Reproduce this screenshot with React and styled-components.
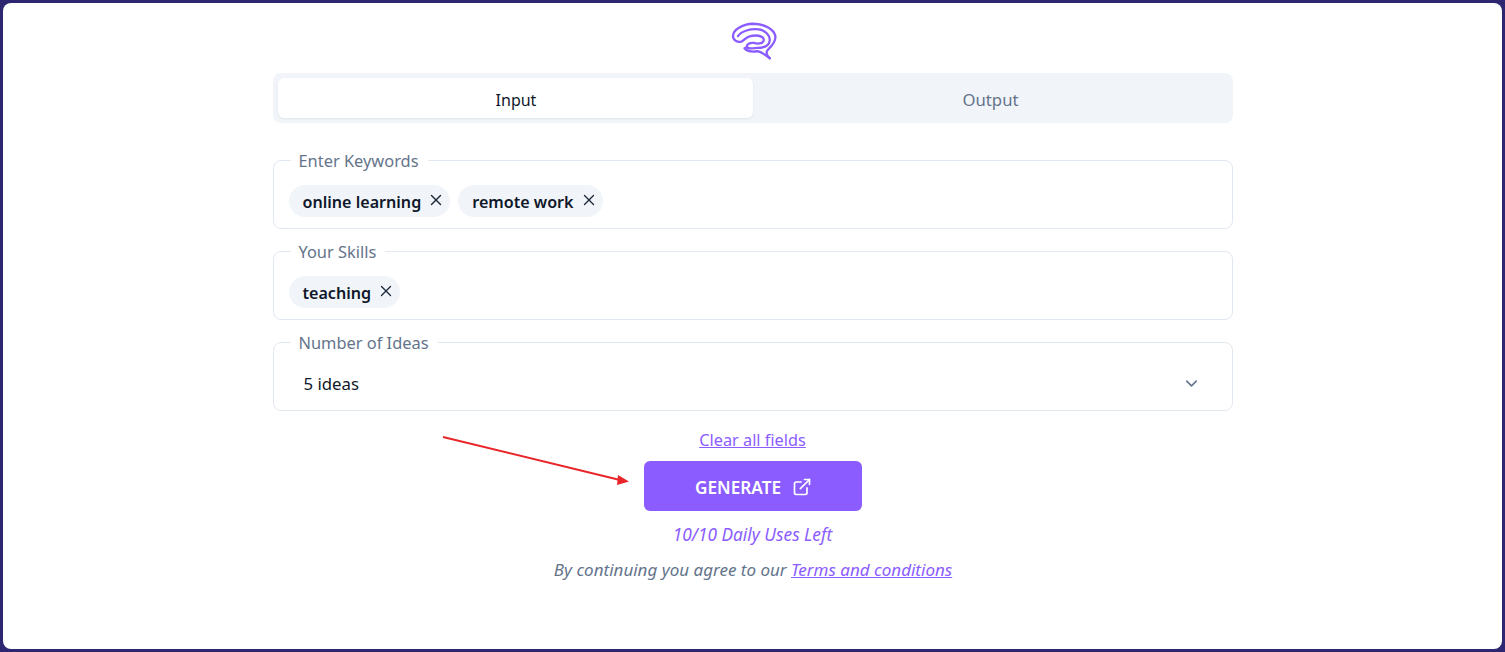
import React from 'react'
import styled, { createGlobalStyle } from 'styled-components'
import { ChevronDown, ExternalLink, X } from 'lucide-react'

const GlobalStyle = createGlobalStyle`
  html, body {
    margin: 0;
    padding: 0;
    height: 100%;
    background: #2e2670;
  }
  body {
    font-family: "Noto Sans", "Open Sans", "Liberation Sans", sans-serif;
    overflow: hidden;
  }
`

const Panel = styled.main`
  position: relative;
  box-sizing: border-box;
  width: 1499px;
  height: 646px;
  margin: 3px;
  padding-top: 17px;
  background: #fff;
  border-radius: 8px;
  display: flex;
  flex-direction: column;
  align-items: center;
`

const Logo = styled.svg`
  display: block;
  width: 48px;
  height: 40px;
  margin-bottom: 13px;
`

const Column = styled.div`
  width: 960px;
  display: flex;
  flex-direction: column;
`

const Tabs = styled.div`
  display: grid;
  grid-template-columns: 1fr 1fr;
  box-sizing: border-box;
  height: 50px;
  padding: 5px;
  margin-bottom: 26px;
  background: #f1f5f9;
  border-radius: 8px;
`

const Tab = styled.div`
  display: flex;
  align-items: center;
  justify-content: center;
  padding: ${p => (p.$active ? '3px 0 0 2px' : '2px 0 0 1px')};
  font-size: ${p => (p.$active ? '16px' : '16.7px')};
  color: ${p => (p.$active ? '#0f172a' : '#64748b')};
  background: ${p => (p.$active ? '#fff' : 'transparent')};
  border-radius: 6px;
  box-shadow: ${p => (p.$active ? '0 1px 2px rgba(15, 23, 42, 0.08)' : 'none')};
`

const Field = styled.fieldset`
  box-sizing: border-box;
  min-width: 0;
  margin: 0 0 11px;
  padding: 0 15px;
  border: 1px solid #e2e8f0;
  border-radius: 8px;
`

const Legend = styled.legend`
  margin-left: 2px;
  padding: 2px 9px 0 8px;
  font-size: 16.4px;
  line-height: 20px;
  color: #64748b;
`

const FieldBody = styled.div`
  display: flex;
  align-items: center;
  gap: 8px;
  height: 32px;
  padding: 14px 0 11px;
`

const Chip = styled.span`
  display: inline-flex;
  align-items: center;
  gap: 6px;
  box-sizing: border-box;
  height: 32px;
  padding: 1px 5px 0 14px;
  border-radius: 16px;
  background: #f1f5f9;
  color: #0f172a;
  font-size: 16.1px;
  font-weight: 600;
`

const ChipClose = styled(X)`
  width: 18px;
  height: 18px;
  margin-bottom: 3px;
  color: #1e293b;
`

const SelectValue = styled.div`
  flex: 1;
  padding-left: 15px;
  font-size: 16.8px;
  color: #0f172a;
`

const Chevron = styled(ChevronDown)`
  width: 19px;
  height: 19px;
  margin-right: 16px;
  color: #64748b;
`

const Actions = styled.div`
  display: flex;
  flex-direction: column;
  align-items: center;
  margin-top: 6px;
`

const TextLink = styled.a`
  color: #8b5cff;
  text-decoration: underline;
  font-size: 17px;
`

const ClearLink = styled(TextLink)`
  font-size: 16.3px;
  line-height: 24px;
  margin-bottom: 9px;
`

const GenerateButton = styled.button`
  display: flex;
  align-items: center;
  justify-content: center;
  gap: 11px;
  box-sizing: border-box;
  width: 218px;
  height: 50px;
  padding: 2px 0 0 2px;
  border: 0;
  border-radius: 6px;
  background: #8b5cff;
  color: #fff;
  font-family: inherit;
  font-size: 17.2px;
  font-weight: 600;
`

const Uses = styled.div`
  margin-top: 12px;
  color: #8b5cff;
  font-size: 17.3px;
  font-style: italic;
  line-height: 24px;
`

const Terms = styled.div`
  margin-top: 11px;
  padding-left: 1px;
  color: #64748b;
  font-size: 17px;
  font-style: italic;
  line-height: 24px;
`

const Arrow = styled.svg`
  position: absolute;
  left: 437px;
  top: 431px;
  width: 195px;
  height: 55px;
`

const BrainLogo = () => (
  <Logo viewBox="85 58 145 120" fill="none" stroke="#8b5cff" strokeWidth="7" strokeLinecap="round" strokeLinejoin="round">
    <path d="M208 173C199 166 195 156 203 147C215 136 227 122 225 106C221 84 190 69 157 69C125 70 97 88 97 106C97 119 110 125 122 123C130 121 135 110 147 107C165 102 187 104 190 116C192 128 175 131 160 127C148 125 137 132 140 138" />
    <path d="M112 106C122 91 150 83 175 86C195 89 210 105 208 120C206 135 190 142 170 142C155 143 143 145 137 140" />
    <path d="M132 143C140 154 155 154 170 152C180 151 195 164 208 173" />
  </Logo>
)

const Fieldset = ({ label, children }) => (
  <Field>
    <Legend>{label}</Legend>
    <FieldBody>{children}</FieldBody>
  </Field>
)

const Tag = ({ children }) => (
  <Chip>
    {children}
    <ChipClose strokeWidth={1.8} />
  </Chip>
)

export default function App() {
  return (
    <>
      <GlobalStyle />
      <Panel>
        <BrainLogo />
        <Column>
          <Tabs>
            <Tab $active>Input</Tab>
            <Tab>Output</Tab>
          </Tabs>
          <Fieldset label="Enter Keywords">
            <Tag>online learning</Tag>
            <Tag>remote work</Tag>
          </Fieldset>
          <Fieldset label="Your Skills">
            <Tag>teaching</Tag>
          </Fieldset>
          <Fieldset label="Number of Ideas">
            <SelectValue>5 ideas</SelectValue>
            <Chevron strokeWidth={2} />
          </Fieldset>
        </Column>
        <Actions>
          <ClearLink href="#">Clear all fields</ClearLink>
          <GenerateButton>
            GENERATE
            <ExternalLink size={20} strokeWidth={2} />
          </GenerateButton>
          <Uses>10/10 Daily Uses Left</Uses>
          <Terms>
            By continuing you agree to our <TextLink href="#">Terms and conditions</TextLink>
          </Terms>
        </Actions>
        <Arrow viewBox="0 0 195 55">
          <line x1="3" y1="3" x2="180" y2="46" stroke="#e8262a" strokeWidth="2" />
          <polygon points="189,47.5 178,41 177,51" fill="#e8262a" />
        </Arrow>
      </Panel>
    </>
  )
}
